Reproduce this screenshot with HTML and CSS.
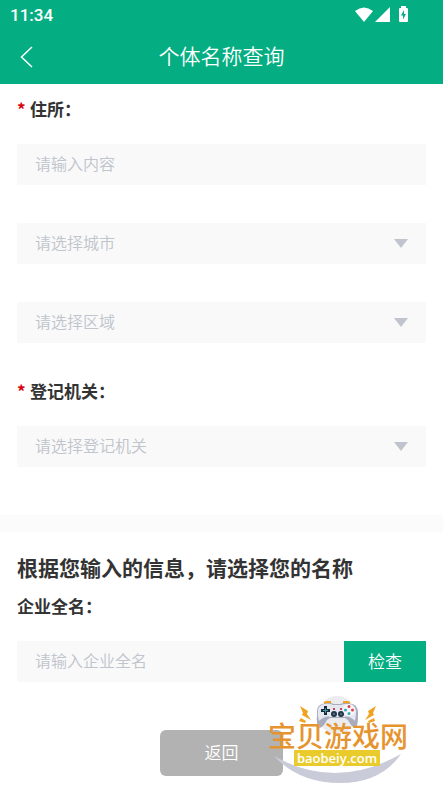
FILE: index.html
```html
<!DOCTYPE html>
<html lang="zh-CN">
<head>
<meta charset="utf-8">
<meta name="viewport" content="width=device-width, initial-scale=1">
<title>个体名称查询</title>
<link rel="stylesheet" href="styles.css">
</head>
<body>
<header class="top">
  <div class="status">
    <span class="time">11:34</span>
    <svg class="status-icons" width="56" height="16" viewBox="0 0 56 16" fill="#fff" aria-hidden="true">
      <path d="M0 4Q9-3 18 4L9 15Z"/>
      <path d="M35 0V15H20Z"/>
      <path fill-rule="evenodd" d="M46 1V-1H51V1H52Q53 1 53 2V14Q53 15 52 15H45Q44 15 44 14V2Q44 1 45 1ZM49 3L46 8.500H48V12.500L51 7H49Z"/>
    </svg>
  </div>
  <div class="nav">
    <a class="back" href="#" aria-label="返回上一页"><svg width="14" height="22" viewBox="0 0 14 22" fill="none" stroke="#fff" stroke-width="1.500"><path d="M12 1L1.500 11L12 21"/></svg></a>
    <h1>个体名称查询</h1>
  </div>
</header>
<main>
  <form>
    <section class="group">
      <label class="label" for="address"><span class="required">*</span>住所：</label>
      <input class="field" id="address" type="text" placeholder="请输入内容">
      <div class="select">
        <select class="field" aria-label="城市"><option>请选择城市</option></select>
        <svg class="arrow" width="14" height="9" viewBox="0 0 14 9"><path d="M0 0H14L7 9Z"/></svg>
      </div>
      <div class="select">
        <select class="field" aria-label="区域"><option>请选择区域</option></select>
        <svg class="arrow" width="14" height="9" viewBox="0 0 14 9"><path d="M0 0H14L7 9Z"/></svg>
      </div>
      <label class="label next" for="office"><span class="required">*</span>登记机关：</label>
      <div class="select first">
        <select class="field" id="office"><option>请选择登记机关</option></select>
        <svg class="arrow" width="14" height="9" viewBox="0 0 14 9"><path d="M0 0H14L7 9Z"/></svg>
      </div>
    </section>
    <section class="group names">
      <h2>根据您输入的信息，请选择您的名称</h2>
      <label class="label" for="company">企业全名：</label>
      <div class="check-row">
        <input class="field" id="company" type="text" placeholder="请输入企业全名">
        <button class="check" type="button">检查</button>
      </div>
      <div class="actions">
        <button class="return" type="button">返回</button>
        <div class="brand">
          <svg class="brand-art" width="144" height="92" viewBox="0 0 144 92" aria-hidden="true">
            <circle cx="69" cy="20" r="19" fill="#ececf0"/>
            <path d="M6 61Q68 96 133 59Q113 88 72 88Q31 88 6 61Z" fill="#c9cbd9"/>
            <g fill="#f0a322">
              <path d="M32 11L40 16L39 19L43 25L34 20L35 18Z"/>
              <path d="M108 11L100 16L101 19L97 25L106 20L105 18Z"/>
              <path d="M33 23L38 26L37 28L31 26ZM106 23L100 26L101 28L107 26Z"/>
            </g>
            <path d="M56 7L58 6H63V9H56ZM75 6H80L82 7V9H75Z" fill="#f0a322"/>
            <path d="M55 9Q62 7 66 9H72Q77 7 83 9Q89 9 90 17V22Q90 29 88 33Q84 33 80 25L77 23H62L59 25Q55 33 51 33Q48 29 49 20V16Q49 10 55 9Z" fill="#a8acbd"/>
            <path d="M56 9Q62 8 65 10H73Q77 8 83 10Q89 12 88 19L87 26Q81 20 76 22H63Q57 20 51 26Q49 20 50 15Q50 11 56 9Z" fill="#e6e8f0"/>
            <path d="M56 11H59V14H62V17H59V20H56V17H53V14H56Z" fill="#182b3b"/>
            <path d="M55 15.500H60M57.500 13V18" stroke="#4b91a3"/>
            <g fill="#233547"><circle cx="66" cy="19" r="3"/><circle cx="73" cy="19" r="3"/></g>
            <g fill="#5c8292"><circle cx="66" cy="19" r="1"/><circle cx="73" cy="19" r="1"/></g>
            <path d="M65 14H67M72 14H74" stroke="#cb4052" stroke-width="2"/>
            <circle cx="81" cy="15" r="6" fill="#f6f7fa"/>
            <g fill="#e13d4d"><circle cx="81" cy="11.500" r="1.500"/><circle cx="84.500" cy="15" r="1.500"/></g>
            <g fill="#37a9b8"><circle cx="77.500" cy="15" r="1.500"/><circle cx="81" cy="18.500" r="1.500"/></g>
          </svg>
          <div class="brand-name">宝贝游戏网</div>
          <div class="brand-url">baobeiy.com</div>
        </div>
      </div>
    </section>
  </form>
</main>
</body>
</html>
```
FILE: styles.css
```css
* { box-sizing: border-box; }
body {
  margin: 0;
  background: #fff;
  color: #333;
  font-family: "Noto Sans CJK SC", sans-serif;
}
button, input, select { font: inherit; border: 0; border-radius: 0; }
.top { background: #05ae82; color: #fff; }
.status {
  display: flex;
  justify-content: space-between;
  align-items: center;
  height: 30px;
  padding: 0 32px 0 10px;
}
.time { font: 500 17px/30px Roboto, sans-serif; }
.status-icons { overflow: visible; }
.nav {
  display: grid;
  grid-template-columns: 48px 1fr 48px;
  align-items: center;
  height: 54px;
}
.back { display: flex; padding-left: 20px; }
h1 { margin: 0; padding-bottom: 4px; text-align: center; font-size: 21px; line-height: 30px; font-weight: 350; }
.group { padding: 13px 17px 48px; }
.label {
  display: block;
  margin-bottom: 23px;
  font-size: 17px;
  line-height: 24px;
  font-weight: 700;
}
.label.next { margin-top: 36px; }
.required {
  display: inline-block;
  width: 13px;
  color: #d9000b;
}
.field {
  display: block;
  width: 100%;
  height: 41px;
  padding: 0 18px 3px;
  background: #f9f9f9;
  color: #c0c4cc;
  font-size: 16px;
  line-height: 24px;
  font-weight: 350;
  appearance: none;
}
.field::placeholder { color: #c0c4cc; opacity: 1; }
.select { display: grid; align-items: center; margin-top: 38px; }
.select.first { margin-top: 0; }
.select > * { grid-area: 1 / 1; }
.arrow { justify-self: end; margin-right: 18px; fill: #c0c4cc; pointer-events: none; }
.names { border-top: 17px solid #fbfbfb; padding-top: 20px; padding-bottom: 12px; }
h2 { margin: 0 0 12px; font-size: 21px; line-height: 30px; font-weight: 700; }
.check-row { display: flex; }
.check-row .field { flex: 1; min-width: 0; }
.check, .return {
  padding: 0 0 3px;
  color: #fff;
  font-size: 17px;
  font-weight: 350;
}
.check { width: 82px; background: #05ae82; }
.actions { position: relative; display: flex; justify-content: center; margin-top: 48px; }
.return {
  width: 123px;
  height: 46px;
  border-radius: 6px;
  background: #b2b2b2;
}
.brand { position: absolute; right: 14px; top: -35px; width: 144px; height: 92px; }
.brand-art { position: absolute; inset: 0; }
.brand-name {
  position: absolute;
  top: 26px;
  left: 0;
  color: #e5942f;
  font-size: 28px;
  line-height: 28px;
  font-weight: 500;
  white-space: nowrap;
}
.brand-url {
  position: absolute;
  top: 55px;
  left: 26px;
  width: 86px;
  background: #eacb2c;
  color: #fff;
  text-align: center;
  font: 600 13px/16px "Open Sans", sans-serif;
}
```
